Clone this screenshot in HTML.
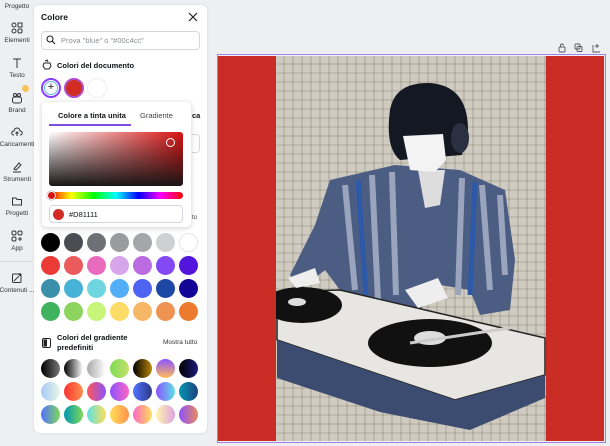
<!DOCTYPE html>
<html><head><meta charset="utf-8"><style>
*{box-sizing:border-box;margin:0;padding:0}
body{width:610px;height:446px;overflow:hidden;background:#edeff3;font-family:"Liberation Sans",sans-serif;position:relative;color:#0d1216}
.rail{position:absolute;left:0;top:0;width:34px;height:446px}
.ri{position:absolute;left:-4px;width:42px;text-align:center;font-size:6.5px;color:#333;white-space:nowrap}
.ri svg{display:block;margin:0 auto 3px}
.panel{position:absolute;left:34px;top:5px;width:173px;height:428px;background:#fff;border-radius:6px;box-shadow:0 0 3px rgba(0,0,0,.1)}
.abs{position:absolute}
.sw{position:absolute;width:19px;height:19px;border-radius:50%}
.pop{position:absolute;left:42px;top:102px;width:149px;height:125px;background:#fff;border-radius:5px;box-shadow:0 1px 6px rgba(0,0,0,.2)}
</style></head><body>
<div class="rail">
 <div class="ri" style="top:3px">Progetto</div>
 <div class="ri" style="top:22px"><svg width="12" height="12" viewBox="0 0 12 12" fill="none" stroke="#333" stroke-width="1"><circle cx="3" cy="3" r="2"/><rect x="7" y="1" width="4" height="4"/><circle cx="3" cy="9" r="2"/><rect x="7" y="7" width="4" height="4" rx="1.5"/></svg>Elementi</div>
 <div class="ri" style="top:57px"><svg width="12" height="12" viewBox="0 0 12 12" fill="none" stroke="#333" stroke-width="1"><path d="M2 2H10M6 2V11"/></svg>Testo</div>
 <div class="abs" style="left:22px;top:85px;width:7px;height:7px;border-radius:50%;background:#f3c35a"></div>
 <div class="ri" style="top:92px"><svg width="12" height="12" viewBox="0 0 12 12" fill="none" stroke="#333" stroke-width="1"><rect x="1.5" y="5" width="9" height="6" rx="2"/><circle cx="4" cy="3" r="1.5"/><circle cx="8" cy="3" r="1.5"/></svg>Brand</div>
 <div class="ri" style="top:126px"><svg width="12" height="12" viewBox="0 0 12 12" fill="none" stroke="#333" stroke-width="1"><path d="M3 9H2.5A2 2 0 0 1 3 5 3 3 0 0 1 9 5 2 2 0 0 1 9.5 9H9M6 10V6M4.5 7.5 6 6 7.5 7.5"/></svg>Caricamenti</div>
 <div class="ri" style="top:161px"><svg width="12" height="12" viewBox="0 0 12 12" fill="none" stroke="#333" stroke-width="1"><path d="M3 8 8 2 10 4 5 9ZM2 11H10"/></svg>Strumenti</div>
 <div class="ri" style="top:195px"><svg width="12" height="12" viewBox="0 0 12 12" fill="none" stroke="#333" stroke-width="1"><path d="M1.5 3H5L6 4.5H10.5V10H1.5Z"/></svg>Progetti</div>
 <div class="ri" style="top:230px"><svg width="12" height="12" viewBox="0 0 12 12" fill="none" stroke="#333" stroke-width="1"><rect x="1" y="1" width="4" height="4" rx="1.5"/><rect x="7" y="1" width="4" height="4" rx="1.5"/><rect x="1" y="7" width="4" height="4" rx="1.5"/><path d="M9 7V11M7 9H11"/></svg>App</div>
 <div class="abs" style="left:0;top:261px;width:32px;height:1px;background:#d8dbe0"></div>
 <div class="ri" style="top:272px"><svg width="12" height="12" viewBox="0 0 12 12" fill="none" stroke="#333" stroke-width="1"><rect x="1.5" y="2" width="8.5" height="8.5" rx="1"/><path d="M3 9 8 4M9 1V4M7.5 2.5H10.5"/></svg>Contenuti ...</div>
</div>

<div class="panel"></div>
<div class="abs" style="left:41px;top:12px;font-size:8.5px;font-weight:bold">Colore</div>
<svg class="abs" style="left:188px;top:12px" width="10" height="10" viewBox="0 0 10 10" stroke="#222" stroke-width="1.2"><path d="M1 1 9 9M9 1 1 9"/></svg>
<div class="abs" style="left:41px;top:31px;width:159px;height:19px;border:1px solid #d3d6dc;border-radius:4px"></div>
<svg class="abs" style="left:46px;top:35px" width="10" height="10" viewBox="0 0 10 10" fill="none" stroke="#222" stroke-width="1.1"><circle cx="4" cy="4" r="3"/><path d="M6.3 6.3 9 9"/></svg>
<div class="abs" style="left:61px;top:36px;font-size:7.5px;color:#8a8f97">Prova "blue" o "#00c4cc"</div>
<svg class="abs" style="left:42px;top:59px" width="11" height="11" viewBox="0 0 11 11" fill="none" stroke="#222" stroke-width="1"><path d="M3 2 5 1 6 3M2 4H8L9 7 7 10H3L1 7Z"/></svg>
<div class="abs" style="left:57px;top:61px;font-size:7.5px;font-weight:bold">Colori del documento</div>
<div class="sw" style="left:41px;top:78px;width:20px;height:20px;border:2px solid #8b3dff;background:#fff"></div>
<div class="abs" style="left:44px;top:81px;width:14px;height:14px;border-radius:50%;border:1.5px solid #6bd;text-align:center;font-size:11px;line-height:11px">+</div>
<div class="sw" style="left:64px;top:78px;width:20px;height:20px;border:2px solid #b04dcc;background:#d32c22"></div>
<div class="sw" style="left:87px;top:78px;width:20px;height:20px;border:1px solid #eee;background:#fff"></div>
<div class="abs" style="left:192px;top:111px;font-size:7.5px;font-weight:bold">ca</div>
<div class="abs" style="left:192px;top:134px;width:8px;height:19px;border:1px solid #d3d6dc;border-left:none;border-radius:0 4px 4px 0"></div>
<div class="abs" style="left:192px;top:215px;font-size:6px;color:#444">to</div>

<div class="pop">
 <div class="abs" style="left:16px;top:9px;font-size:7.5px;font-weight:bold">Colore a tinta unita</div>
 <div class="abs" style="left:98px;top:9px;font-size:7.5px;color:#444">Gradiente</div>
 <div class="abs" style="left:7px;top:22px;width:82px;height:1.5px;background:#7d4ee0"></div>
 <div class="abs" style="left:7px;top:30px;width:134px;height:54px;border-radius:3px;background:linear-gradient(to top,#1a1616,rgba(0,0,0,0)),linear-gradient(to right,#fff,#d81111)"></div>
 <div class="abs" style="left:124px;top:36px;width:9px;height:9px;border-radius:50%;border:1.5px solid #fff"></div>
 <div class="abs" style="left:7px;top:90px;width:134px;height:7px;border-radius:4px;background:linear-gradient(to right,#f00,#ff0,#0f0,#0ff,#00f,#f0f,#f00)"></div>
 <div class="abs" style="left:5px;top:89px;width:9px;height:9px;border-radius:50%;background:#d81111;border:1.5px solid #fff;box-shadow:0 0 1px #000"></div>
 <div class="abs" style="left:7px;top:103px;width:134px;height:18px;border:1px solid #d3d6dc;border-radius:4px"></div>
 <div class="abs" style="left:11px;top:107px;width:11px;height:11px;border-radius:50%;background:#d32c22"></div>
 <div class="abs" style="left:27px;top:108px;font-size:7.5px">#D81111</div>
</div>

<div id="grid"></div>
<svg class="abs" style="left:42px;top:338px" width="9" height="10" viewBox="0 0 9 10" fill="none" stroke="#222" stroke-width="1"><rect x="0.5" y="0.5" width="8" height="9" rx="1.5"/><rect x="2" y="2" width="2.5" height="6" fill="#222"/></svg>
<div class="abs" style="left:57px;top:333px;font-size:7.5px;font-weight:bold;line-height:10px">Colori del gradiente<br>predefiniti</div>
<div class="abs" style="left:163px;top:339px;font-size:6.5px;color:#333">Mostra tutto</div>

<div class="abs" style="left:217px;top:54px;width:389px;height:389px;border:1.5px solid #a57ee8"></div>
<div class="abs" style="left:218px;top:56px;width:386px;height:385px;background:#c92d25"></div>
<div class="abs" style="left:276px;top:56px;width:270px;height:385px;background:#c2bcae;background-image:repeating-linear-gradient(to right,rgba(255,255,255,.12) 0 7px,rgba(0,0,0,.06) 7px 9px),repeating-linear-gradient(to bottom,rgba(255,255,255,.12) 0 7px,rgba(0,0,0,.06) 7px 9px)"></div>
<svg class="abs" style="left:276px;top:56px" width="270" height="385" viewBox="276 56 270 385">
 <path d="M330 180 L395 165 L460 170 L505 190 L515 260 L510 310 L480 315 L470 290 L440 285 L420 310 L370 300 L340 290 L325 270 L300 290 L290 275 L315 225Z" fill="#4c5d84"/>
 <path d="M345 185 355 290M372 175 378 300M392 172 396 295M462 178 458 295M482 185 490 290M500 195 505 275" stroke="#9aa5bd" stroke-width="6"/>
 <path d="M358 180 366 295M475 182 470 295" stroke="#2c5aa8" stroke-width="5"/>
 <path d="M418 170 445 170 440 205 425 208Z" fill="#ddd"/>
 <path d="M390 110 Q395 82 430 83 Q468 86 468 130 L462 155 L400 160 Q385 148 390 110Z" fill="#141822"/>
 <path d="M403 136 L443 134 L446 160 L435 172 L410 170Z" fill="#f3f3f3"/>
 <ellipse cx="460" cy="138" rx="9" ry="15" fill="#2b3040"/>
 <path d="M277 292 L340 290 L545 338 L545 375 L455 400 L277 340Z" fill="#e7e6e2" stroke="#222" stroke-width="1.5"/>
 <path d="M277 340 L455 400 L545 375 L545 398 L470 430 L380 412 L277 378Z" fill="#3c4c70"/>
 <ellipse cx="302" cy="305" rx="40" ry="18" fill="#111"/>
 <ellipse cx="297" cy="302" rx="9" ry="4" fill="#ddd"/>
 <ellipse cx="430" cy="343" rx="62" ry="24" fill="#111"/>
 <ellipse cx="430" cy="338" rx="16" ry="7" fill="#ddd"/>
 <path d="M410 343 L510 328" stroke="#ccc" stroke-width="3"/>
 <path d="M288 278 L315 268 L320 283 L296 288Z M405 290 L438 278 L448 298 L418 308Z" fill="#eee"/>
</svg>
<svg class="abs" style="left:557px;top:43px" width="48" height="10" viewBox="0 0 48 10" fill="none" stroke="#555" stroke-width="0.9"><rect x="2" y="4" width="6" height="5" rx="1"/><path d="M3.5 4V2.5A1.5 1.5 0 0 1 6.5 2.5"/><rect x="18" y="1" width="5" height="5" rx="1"/><rect x="20" y="3.5" width="5" height="5" rx="1"/><path d="M36 2V9H43M40 1V5M38 3H42"/></svg>
<script>
var rows=[["#000","#4b4d52","#6e7075","#9a9b9e","#a5a6a9","#cfd0d2","#fff"],
["#ec3a37","#ec5b5b","#e96bbd","#d7a5ea","#ba6be0","#8249f5","#5315dc"],
["#3a8fab","#46b3d6","#6fd6e0","#52aef5","#4e64f2","#1d48a6","#150596"],
["#3fb25d","#8cd45d","#c6f57a","#fcdc67","#f6b765","#ef9352","#ec7a2f"]];
var g=["linear-gradient(90deg,#000,#777)","linear-gradient(90deg,#000,#fff)","linear-gradient(90deg,#aaa,#fff)","linear-gradient(90deg,#7ed957,#c6e26c)","linear-gradient(90deg,#000,#b8860b)","linear-gradient(180deg,#8c52ff,#ffbd59)","linear-gradient(90deg,#000,#1d1b7a)",
"linear-gradient(90deg,#a6c9f5,#e8f7e7)","linear-gradient(90deg,#ff3131,#ff914d)","linear-gradient(90deg,#ff5757,#8c52ff)","linear-gradient(90deg,#8c52ff,#ff66c4)","linear-gradient(90deg,#5271ff,#2b3a8a)","linear-gradient(90deg,#8c52ff,#5ce1e6)","linear-gradient(90deg,#0097b2,#204080)",
"linear-gradient(90deg,#5271ff,#7ed957)","linear-gradient(90deg,#0097b2,#7ed957)","linear-gradient(90deg,#5ce1e6,#ffde59)","linear-gradient(90deg,#ffde59,#ff914d)","linear-gradient(90deg,#ff66c4,#ffde59)","linear-gradient(90deg,#fff7ad,#e0a0e0)","linear-gradient(90deg,#8c52ff,#e98a5a)"];
var h="";
rows.forEach(function(r,i){r.forEach(function(c,j){h+='<div class="sw" style="left:'+(41+j*23)+'px;top:'+(233+i*23)+'px;background:'+c+(c=="#fff"?';border:1px solid #e4e4e4':'')+'"></div>'})});
g.forEach(function(c,k){h+='<div class="sw" style="left:'+(41+(k%7)*23)+'px;top:'+(359+Math.floor(k/7)*23)+'px;background:'+c+'"></div>'});
document.getElementById("grid").innerHTML=h;
</script>
</body></html>
